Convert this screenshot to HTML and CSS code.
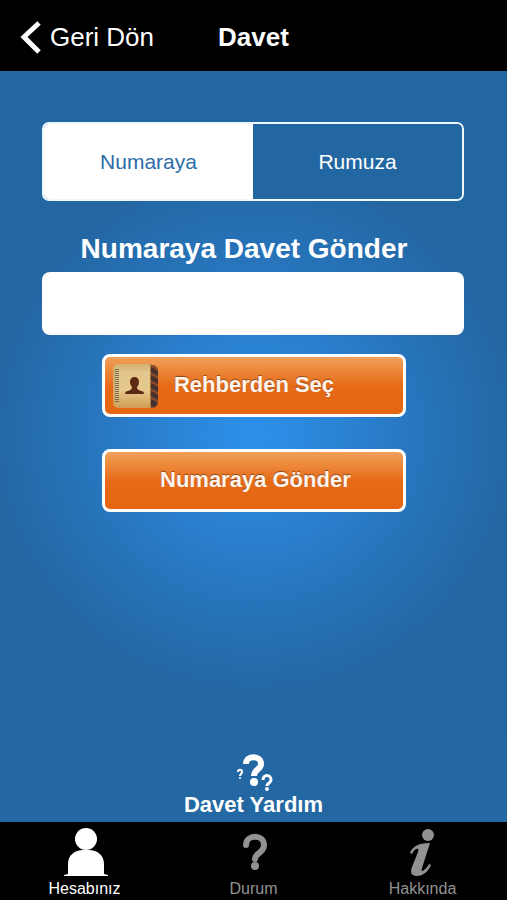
FILE: index.html
```html
<!DOCTYPE html>
<html lang="tr">
<head>
<meta charset="utf-8">
<meta name="viewport" content="width=device-width, initial-scale=1">
<title>Davet</title>
<link rel="stylesheet" href="styles.css">
</head>
<body>
<header class="topbar">
  <a class="back" href="#geri">
    <svg class="back-icon" viewBox="0 0 22 36" aria-hidden="true"><path d="M19 3 4 17 19 32" fill="none" stroke="#fff" stroke-width="5"/></svg>
    <span>Geri Dön</span>
  </a>
  <h1 class="title">Davet</h1>
</header>

<main class="content">
  <form class="invite">
    <div class="segments">
      <button class="segment segment-active" type="button" aria-pressed="true">Numaraya</button>
      <button class="segment" type="button" aria-pressed="false">Rumuza</button>
    </div>
    <label class="invite-label" for="number">Numaraya Davet Gönder</label>
    <input class="invite-input" id="number" type="tel">
    <div class="actions">
      <button class="action" type="button">
        <svg class="book" viewBox="0 0 48 46" aria-hidden="true">
          <defs>
            <linearGradient id="cover" x1="0" y1="0" x2="0" y2="1">
              <stop offset="0" stop-color="#d2b070"/>
              <stop offset=".2" stop-color="#e2c68c"/>
              <stop offset=".6" stop-color="#e6c88c"/>
              <stop offset="1" stop-color="#cf9d54"/>
            </linearGradient>
          </defs>
          <path d="M30 2h11q5 1 5 6v31q0 5-5 6H30z" fill="#8a4a2a"/>
          <path d="M39 4l7 4v5l-7-4zM39 12l7 4v5l-7-4zM39 20l7 4v5l-7-4zM39 28l7 4v5l-7-4zM39 36l7 4-3 4-4-1z" fill="#43302f"/>
          <path d="M6 1h33v44H7q-6 0-6-6V7q0-6 5-6z" fill="url(#cover)"/>
          <path d="M2 6v34" stroke="#c08f4e" stroke-width="1"/>
          <path d="M5 6v34" stroke="#776a55" stroke-width="4" stroke-dasharray="1 1"/>
          <path d="M38.500 1v44" stroke="#a9763b"/>
          <path d="M22.500 14c3 0 4.500 2 4.500 5 0 2-1 4-2 5 0 3 2 3 4 4 2 0 3 1 3 3H13c0-2 1-3 3-3 2-1 4-1 4-4-1-1-2-3-2-5 0-3 1.500-5 4.500-5z" fill="#5f2a14"/>
        </svg>
        <span class="action-text">Rehberden Seç</span>
      </button>
      <button class="action" type="button"><span class="action-text">Numaraya Gönder</span></button>
    </div>
  </form>
  <a class="help" href="#yardim">
    <svg class="help-icon" viewBox="0 0 38 38" fill="none" stroke="#fff" aria-hidden="true">
      <path d="M11 11c0-9 15-9 15 0 0 6-7 5-7 12" stroke-width="6"/>
      <circle cx="19" cy="29" r="4" fill="#fff" stroke="none"/>
      <path d="M28 27c0-6 8-6 8 0 0 3-4 3-4 6" stroke-width="3"/>
      <circle cx="32" cy="36" r="2" fill="#fff" stroke="none"/>
      <path d="M3 19c0-3 4-3 4 0 0 2-2 2-2 4" stroke-width="2"/>
      <circle cx="5" cy="25" r="1" fill="#fff" stroke="none"/>
    </svg>
    <span>Davet Yardım</span>
  </a>
</main>

<nav class="tabs">
  <a class="tab tab-active" href="#hesabiniz">
    <svg class="tab-icon" viewBox="0 0 48 52" fill="currentColor" aria-hidden="true">
      <circle cx="25" cy="12" r="11"/>
      <path d="M3 49v-1l4-1V37c0-9 7-14 15-14h6c8 0 15 5 15 14v10l4 1v1z"/>
    </svg>
    <span>Hesabınız</span>
  </a>
  <a class="tab" href="#durum">
    <svg class="tab-icon" viewBox="0 0 48 52" aria-hidden="true">
      <path d="M16 18C16 7 34 7 34 18c0 8-9 8-9 14" fill="none" stroke="currentColor" stroke-width="6" stroke-linecap="round"/>
      <circle cx="25" cy="39" r="4" fill="currentColor"/>
    </svg>
    <span>Durum</span>
  </a>
  <a class="tab" href="#hakkinda">
    <svg class="tab-icon" viewBox="0 0 48 52" fill="currentColor" aria-hidden="true">
      <circle cx="29" cy="8" r="6"/>
      <path d="M31 16 23 41c-1 3 0 4 2 2 3-2 4-4 5-6l2 1C30 43 25 49 18 49c-6 0-7-4-5-9l6-15c1-3 0-4-2-3-2 1-3 3-4 5l-2-1C13 20 19 16 31 16z"/>
    </svg>
    <span>Hakkında</span>
  </a>
</nav>
</body>
</html>
```
FILE: styles.css
```css
* {
  box-sizing: border-box;
}

body {
  margin: 0;
  min-height: 100vh;
  display: flex;
  flex-direction: column;
  background: #000;
  color: #fff;
  font-family: "Liberation Sans", Arial, sans-serif;
}

a {
  color: inherit;
  text-decoration: none;
}

button,
input {
  font: inherit;
  color: inherit;
}

.topbar {
  display: grid;
  grid-template-columns: 1fr auto 1fr;
  align-items: center;
  height: 71px;
  padding: 4px 20px 0;
  font-size: 26px;
}

.back {
  display: flex;
  align-items: center;
  gap: 8px;
}

.back-icon {
  width: 22px;
  height: 36px;
}

.title {
  margin: 0;
  font-size: 26px;
}

.content {
  flex: 1;
  display: flex;
  flex-direction: column;
  background: radial-gradient(circle 264px at 50% 362px, #2d90ea 0%, #2b82d2 35%, #2774bb 65%, #2367a2 100%);
}

.invite {
  flex: 1;
  display: flex;
  flex-direction: column;
  padding: 51px 43px 24px 42px;
}

.segments {
  display: grid;
  grid-template-columns: 1fr 1fr;
  height: 79px;
  border: 2px solid #eef6ff;
  border-radius: 7px;
  background: #2367a2;
  overflow: hidden;
}

.segment {
  padding: 0;
  border: 0;
  background: #2367a2;
  font-size: 21px;
}

.segment-active {
  background: #fff;
  color: #2c6ca6;
}

.invite-label {
  margin: 32px 18px 7px 0;
  font-size: 28px;
  font-weight: bold;
  line-height: 32px;
  text-align: center;
}

.invite-input {
  width: 100%;
  height: 63px;
  padding: 0 16px;
  border: 0;
  border-radius: 8px;
  background: #fff;
  color: #222;
  font-size: 26px;
}

.actions {
  display: flex;
  flex-direction: column;
  gap: 32px;
  margin: 19px 58px 0 60px;
}

.action {
  display: grid;
  grid-template-columns: 48px 1fr 48px;
  align-items: center;
  height: 63px;
  padding: 0 7px;
  border: 3px solid #fff;
  border-radius: 8px;
  background: linear-gradient(#f0a05a 0%, #ec8638 25%, #e66a17 52%, #e56512 100%);
  color: #fff4ec;
  font-size: 22px;
  font-weight: bold;
  text-shadow: 0 -1px 1px #8a4a20;
}

.book {
  width: 48px;
  height: 46px;
}

.action-text {
  grid-column: 2;
  padding-bottom: 1px;
  white-space: nowrap;
}

.help {
  display: flex;
  flex-direction: column;
  align-items: center;
  padding: 15px 0 3px;
  background: #2468a3;
  font-size: 22px;
  font-weight: bold;
  line-height: 28px;
}

.help-icon {
  width: 38px;
  height: 38px;
}

.tabs {
  display: grid;
  grid-template-columns: repeat(3, 1fr);
  height: 78px;
  padding-top: 5px;
}

.tab {
  display: flex;
  flex-direction: column;
  align-items: center;
  color: #929292;
  font-size: 16px;
  line-height: 20px;
}

.tab-active {
  color: #fff;
}

.tab-icon {
  width: 48px;
  height: 52px;
}
```
